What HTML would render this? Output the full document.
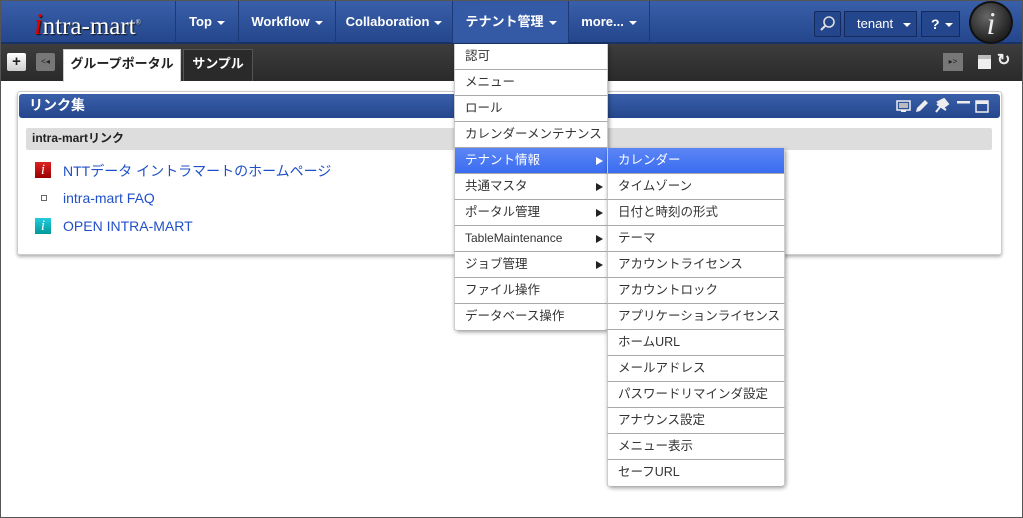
<!DOCTYPE html>
<html><head><meta charset="utf-8"><style>
*{box-sizing:border-box;margin:0;padding:0}
body{width:1023px;height:518px;overflow:hidden;position:relative;background:#fff;font-family:"Liberation Sans","Noto Sans CJK JP",sans-serif}
.a{position:absolute}
#hd{left:0;top:0;width:1023px;height:44px;background:linear-gradient(#3a60aa,#24468c);border-bottom:2px solid #1a3366}
.nav{top:0;height:43px;border-left:1px solid #1d3a78;color:#fff;font-weight:bold;font-size:13px;line-height:43px;text-align:center}
.car{display:inline-block;width:0;height:0;border-left:4px solid transparent;border-right:4px solid transparent;border-top:4px solid #fff;margin-left:5px;vertical-align:middle}
#tb{left:0;top:44px;width:1023px;height:37px;background:linear-gradient(#3d3d3d,#2a2a2a)}
.tab{top:49px;height:32px;font-size:13px;font-weight:bold;line-height:28px;text-align:center;border:1px solid #555;border-bottom:none}
.menu{background:#fff;box-shadow:1px 2px 4px rgba(0,0,0,.4);border-radius:0 0 4px 4px}
.mi{height:26px;border-bottom:1px solid #aaa;font-size:12.5px;color:#333;line-height:25px;padding-left:10px;position:relative;border-left:1px solid #ccc;border-right:1px solid #ccc;white-space:nowrap}
.mi:last-child{border-bottom:none}
.ar::after{content:"";position:absolute;right:4px;top:9px;border-top:4px solid transparent;border-bottom:4px solid transparent;border-left:7px solid #222}
.hl{background:linear-gradient(#5c86f5,#3a6cf0);color:#fff}
.hl.ar::after{border-left-color:#fff}
a{color:#2050c8;text-decoration:none}
</style></head><body>
<div id="hd" class="a"></div>
<div class="a" style="left:34px;top:6px;color:#fff;font-family:'Liberation Serif',serif;font-size:25px;text-shadow:1px 1px 1px #111;white-space:nowrap"><span style="color:#d00;font-style:italic;font-size:31px">i</span>ntra-mart<sup style="font-size:7px">®</sup></div>
<div class="a nav" style="left:175px;width:63px">Top<span class="car"></span></div>
<div class="a nav" style="left:238px;width:97px">Workflow<span class="car"></span></div>
<div class="a nav" style="left:335px;width:117px">Collaboration<span class="car"></span></div>
<div class="a nav" style="left:452px;width:117px;background:#3459a5">テナント管理<span class="car"></span></div>
<div class="a nav" style="left:568px;width:82px;border-right:1px solid #1d3a78">more...<span class="car"></span></div>
<div class="a" style="left:814px;top:11px;width:27px;height:26px;border:1px solid #132a5c;background:#24468c;border-radius:2px"><svg width="25" height="24"><circle cx="14" cy="10" r="5" fill="none" stroke="#ddd" stroke-width="1.6"/><line x1="10" y1="14" x2="6" y2="18" stroke="#ddd" stroke-width="2"/></svg></div>
<div class="a" style="left:844px;top:11px;width:73px;height:26px;border:1px solid #132a5c;background:#24468c;color:#fff;font-size:13px;line-height:24px;padding-left:12px">tenant<span class="car" style="margin-left:10px"></span></div>
<div class="a" style="left:921px;top:11px;width:39px;height:26px;border:1px solid #132a5c;background:#24468c;color:#fff;font-size:14px;font-weight:bold;line-height:24px;padding-left:9px">?<span class="car"></span></div>
<div class="a" style="left:969px;top:1px;width:44px;height:43px;border-radius:50%;background:radial-gradient(circle at 40% 35%,#666,#222 70%);border:2px solid #111;color:#eee;font-family:'Liberation Serif',serif;font-style:italic;font-size:32px;text-align:center;line-height:40px">i</div>
<div id="tb" class="a"></div>
<div class="a" style="left:7px;top:53px;width:19px;height:18px;background:linear-gradient(#fff,#ccc);border-radius:2px;font-weight:bold;font-size:15px;text-align:center;line-height:17px;color:#222">+</div>
<div class="a" style="left:36px;top:53px;width:19px;height:18px;background:#777;border-radius:2px;font-size:8px;text-align:center;line-height:18px;color:#222">&lt;◂</div>
<div class="a tab" style="left:63px;width:118px;background:#fff;color:#222;height:33px;border-color:#ccc">グループポータル</div>
<div class="a tab" style="left:183px;width:70px;background:#2a2a2a;color:#fff">サンプル</div>
<div class="a" style="left:943px;top:53px;width:20px;height:18px;background:#777;font-size:8px;text-align:center;line-height:18px;color:#222">▸&gt;</div>
<div class="a" style="left:978px;top:55px;width:13px;height:14px;background:#eee;border-top:4px solid #bbb"></div>
<div class="a" style="left:997px;top:50px;color:#eee;font-size:16px;font-weight:bold">↻</div>
<div class="a" style="left:17px;top:91px;width:985px;height:164px;border:1px solid #ccc;border-radius:3px;box-shadow:0 2px 3px rgba(0,0,0,.3)"></div>
<div class="a" style="left:19px;top:94px;width:981px;height:24px;background:linear-gradient(#3a60aa,#24468c);border-radius:3px;color:#fff;font-weight:bold;font-size:14px;line-height:23px;padding-left:10px">リンク集</div>
<svg class="a" style="left:896px;top:98px" width="95" height="16">
<rect x="1" y="3" width="13" height="9" fill="none" stroke="#eee" stroke-width="1.5"/><rect x="3" y="5" width="9" height="5" fill="#bbb"/><rect x="5" y="12" width="5" height="2" fill="#eee"/>
<path d="M20 14 L21 10 L29 2 L32 5 L24 13 Z" fill="#eee"/>
<path d="M40 14 L44 9 M42 4 L48 1 L52 6 L48 9 Z M41 6 L50 12" stroke="#eee" stroke-width="2" fill="#eee"/>
<rect x="61" y="3" width="13" height="2.5" fill="#eee"/>
<rect x="80" y="3" width="12" height="11" fill="none" stroke="#eee" stroke-width="1.5"/><rect x="80" y="3" width="12" height="3" fill="#eee"/>
</svg>
<div class="a" style="left:26px;top:128px;width:966px;height:22px;background:#ddd;border-radius:2px;font-size:12px;font-weight:bold;line-height:21px;padding-left:6px;color:#222">intra-martリンク</div>
<div class="a" style="left:35px;top:162px;width:16px;height:16px;background:linear-gradient(#d22,#900);color:#fff;font-family:'Liberation Serif',serif;font-style:italic;font-size:15px;text-align:center;line-height:16px">i</div>
<div class="a" style="left:63px;top:161px;font-size:14px"><a>NTTデータ イントラマートのホームページ</a></div>
<div class="a" style="left:41px;top:195px;width:6px;height:6px;border:1px solid #666"></div>
<div class="a" style="left:63px;top:190px;font-size:14px"><a>intra-mart FAQ</a></div>
<div class="a" style="left:35px;top:218px;width:16px;height:16px;background:linear-gradient(#2cd,#099);color:#fff;font-family:'Liberation Serif',serif;font-style:italic;font-size:15px;text-align:center;line-height:16px">i</div>
<div class="a" style="left:63px;top:218px;font-size:14px"><a>OPEN INTRA-MART</a></div>
<div class="a menu" style="left:454px;top:44px;width:154px">
<div class="mi">認可</div><div class="mi">メニュー</div><div class="mi">ロール</div><div class="mi">カレンダーメンテナンス</div>
<div class="mi hl ar">テナント情報</div><div class="mi ar">共通マスタ</div><div class="mi ar">ポータル管理</div><div class="mi ar" style="font-size:12px">TableMaintenance</div><div class="mi ar">ジョブ管理</div><div class="mi">ファイル操作</div><div class="mi">データベース操作</div>
</div>
<div class="a menu" style="left:607px;top:148px;width:178px">
<div class="mi hl">カレンダー</div><div class="mi">タイムゾーン</div><div class="mi">日付と時刻の形式</div><div class="mi">テーマ</div><div class="mi">アカウントライセンス</div><div class="mi">アカウントロック</div><div class="mi">アプリケーションライセンス</div><div class="mi">ホームURL</div><div class="mi">メールアドレス</div><div class="mi">パスワードリマインダ設定</div><div class="mi">アナウンス設定</div><div class="mi">メニュー表示</div><div class="mi">セーフURL</div>
</div>
<div class="a" style="left:0;top:0;width:1023px;height:518px;border:1px solid #555;pointer-events:none"></div>
</body></html>
